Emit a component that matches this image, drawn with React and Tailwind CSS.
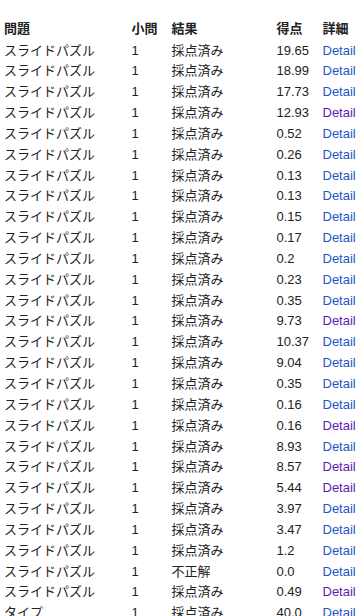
const rows = [
  ["スライドパズル", "1", "採点済み", "19.65", false],
  ["スライドパズル", "1", "採点済み", "18.99", false],
  ["スライドパズル", "1", "採点済み", "17.73", false],
  ["スライドパズル", "1", "採点済み", "12.93", true],
  ["スライドパズル", "1", "採点済み", "0.52", false],
  ["スライドパズル", "1", "採点済み", "0.26", false],
  ["スライドパズル", "1", "採点済み", "0.13", false],
  ["スライドパズル", "1", "採点済み", "0.13", false],
  ["スライドパズル", "1", "採点済み", "0.15", false],
  ["スライドパズル", "1", "採点済み", "0.17", false],
  ["スライドパズル", "1", "採点済み", "0.2", false],
  ["スライドパズル", "1", "採点済み", "0.23", false],
  ["スライドパズル", "1", "採点済み", "0.35", false],
  ["スライドパズル", "1", "採点済み", "9.73", true],
  ["スライドパズル", "1", "採点済み", "10.37", false],
  ["スライドパズル", "1", "採点済み", "9.04", false],
  ["スライドパズル", "1", "採点済み", "0.35", false],
  ["スライドパズル", "1", "採点済み", "0.16", false],
  ["スライドパズル", "1", "採点済み", "0.16", true],
  ["スライドパズル", "1", "採点済み", "8.93", false],
  ["スライドパズル", "1", "採点済み", "8.57", true],
  ["スライドパズル", "1", "採点済み", "5.44", true],
  ["スライドパズル", "1", "採点済み", "3.97", false],
  ["スライドパズル", "1", "採点済み", "3.47", false],
  ["スライドパズル", "1", "採点済み", "1.2", false],
  ["スライドパズル", "1", "不正解", "0.0", false],
  ["スライドパズル", "1", "採点済み", "0.49", true],
  ["タイプ", "1", "採点済み", "40.0", false],
];

function Row({ cells, bold, visited }) {
  return (
    <div className={`flex h-[20.85px] items-center whitespace-nowrap ${bold ? "font-bold" : ""}`}>
      <div className="w-[127.5px] shrink-0">{cells[0]}</div>
      <div className="w-[40px] shrink-0">{cells[1]}</div>
      <div className="w-[105px] shrink-0">{cells[2]}</div>
      <div className="w-[46px] shrink-0">{cells[3]}</div>
      <div className="shrink-0">
        {bold ? (
          cells[4]
        ) : (
          <span className={visited ? "text-[#5e1bb3]" : "text-[#2356c6]"}>Detail</span>
        )}
      </div>
    </div>
  );
}

export default function App() {
  return (
    <div
      className="w-[359px] h-[616px] overflow-hidden bg-white text-[13px] text-[#222] pl-[4px] pt-[18px]"
      style={{ fontFamily: '"Liberation Sans", "Noto Sans CJK JP", sans-serif' }}
    >
      <Row cells={["問題", "小問", "結果", "得点", "詳細"]} bold />
      <div className="h-[1px]" />
      {rows.map((r, i) => (
        <Row key={i} cells={r} visited={r[4]} />
      ))}
    </div>
  );
}
